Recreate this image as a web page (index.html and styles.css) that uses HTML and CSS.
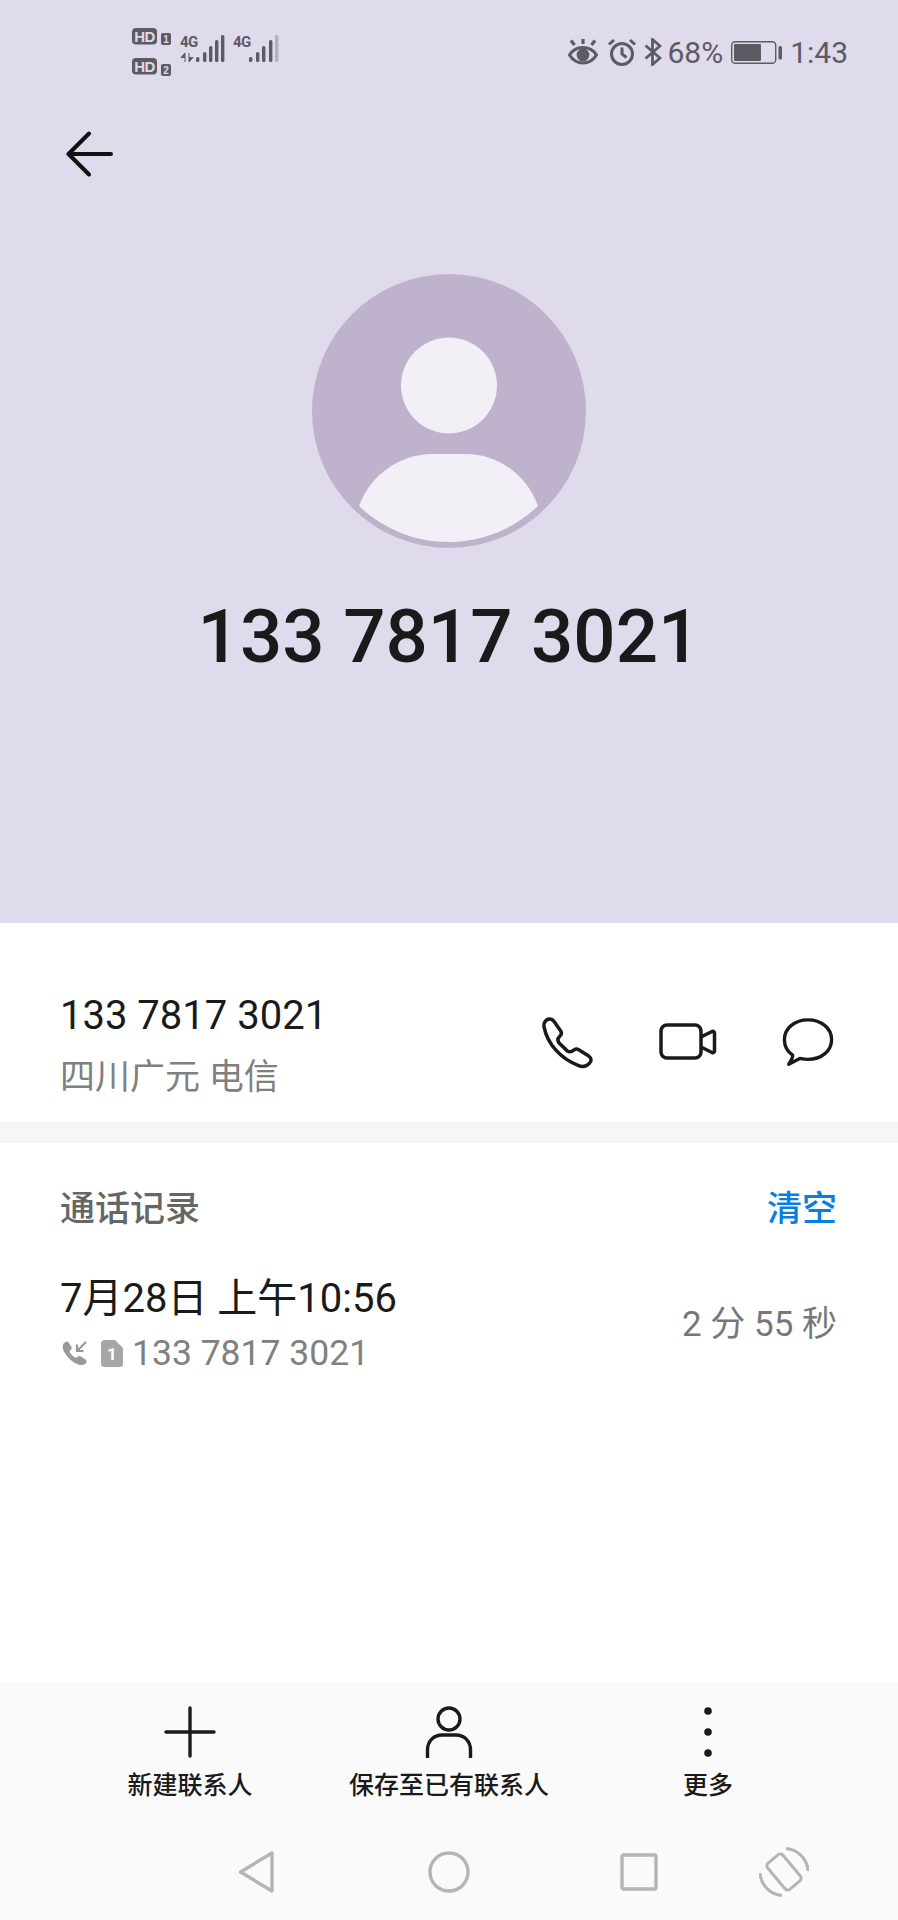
FILE: index.html
```html
<!DOCTYPE html>
<html lang="zh-CN">
<head>
    <meta charset="UTF-8">
    <meta name="viewport" content="width=device-width, initial-scale=1.0">
    <title>133 7817 3021</title>
    <link rel="stylesheet" href="styles.css">
</head>
<body>

    <header class="hero">
        <div class="status-bar">
            <div class="status-left">
                <svg class="icon-hd" viewBox="0 0 42 50" width="42" height="50">
                    <rect x="1" y="1" width="25" height="16.5" rx="4" fill="#5d5a64"/>
                    <text x="13.5" y="14.500" class="hd-text">HD</text>
                    <rect x="30" y="6" width="10" height="12" rx="2" fill="#5d5a64"/>
                    <text x="35" y="15.5" class="hd-num">1</text>
                    <rect x="1" y="31" width="25" height="16.5" rx="4" fill="#5d5a64"/>
                    <text x="13.5" y="44.500" class="hd-text">HD</text>
                    <rect x="30" y="37" width="10" height="12" rx="2" fill="#5d5a64"/>
                    <text x="35" y="46.5" class="hd-num">2</text>
                </svg>
                <svg class="icon-signal" viewBox="0 0 46 30" width="46" height="30">
                    <text x="0" y="13" class="net-text">4G</text>
                    <path d="M5 19v9M5 19l-4 4.5h4M9 28v-9M9 28l4-4.500h-4" fill="#5d5a64" stroke="#5d5a64" stroke-width="1"/>
                    <rect x="16" y="23" width="3.400" height="5" rx="1.500" fill="#5d5a64"/>
                    <rect x="23" y="18" width="3.400" height="10" rx="1.500" fill="#5d5a64"/>
                    <rect x="29" y="12" width="3.400" height="16" rx="1.500" fill="#5d5a64"/>
                    <rect x="35" y="6" width="3.400" height="22" rx="1.500" fill="#5d5a64"/>
                    <rect x="41" y="1" width="3.400" height="27" rx="1.500" fill="#5d5a64"/>
                </svg>
                <svg class="icon-signal" viewBox="0 0 46 30" width="46" height="30">
                    <text x="0" y="13" class="net-text">4G</text>
                    <rect x="16" y="23" width="3.400" height="5" rx="1.500" fill="#5d5a64"/>
                    <rect x="23" y="18" width="3.400" height="10" rx="1.500" fill="#5d5a64"/>
                    <rect x="29" y="12" width="3.400" height="16" rx="1.500" fill="#5d5a64"/>
                    <rect x="36" y="6" width="3.400" height="22" rx="1.500" fill="#5d5a64"/>
                    <rect x="42" y="1" width="3.400" height="27" rx="1.500" fill="#b4b0bd"/>
                </svg>
            </div>
            <div class="status-right">
                <svg viewBox="0 0 30 26" width="30" height="26" fill="none" stroke="#5d5a64" stroke-width="3.200">
                    <path d="M1.500 16C5 10.500 9.500 8.500 15 8.500S25 10.500 28.500 16C25 21.500 20.500 24 15 24S5 21.500 1.500 16Z"/>
                    <circle cx="15" cy="16" r="4.800" fill="#5d5a64"/>
                    <path d="M3 1.500l3.500 4.500M15 0v5M27 1.500L23.500 6"/>
                </svg>
                <svg viewBox="0 0 28 28" width="28" height="28" fill="none" stroke="#5d5a64" stroke-width="3" class="icon-alarm">
                    <circle cx="14" cy="16" r="10.500"/>
                    <path d="M14 9.500V16l4.500 3.500M1 6.500L6 2M27 6.500L22 2"/>
                </svg>
                <svg viewBox="0 0 18 28" width="18" height="28" fill="none" stroke="#5d5a64" stroke-width="2.800" class="icon-bt">
                    <path d="M1.500 7.500L16 20 8.500 26.500V1.500L16 8 1.500 20.500"/>
                </svg>
                <span class="status-text battery-text">68%</span>
                <svg viewBox="0 0 51 23" width="51" height="23" class="icon-battery">
                    <rect x="0.700" y="0.700" width="44" height="21.600" rx="3.500" fill="none" stroke="#5d5a64" stroke-width="1.400"/>
                    <rect x="3" y="3" width="27" height="17" rx="1" fill="#5d5a64"/>
                    <rect x="47.500" y="5" width="3.500" height="13.500" rx="1.500" fill="#5d5a64"/>
                </svg>
                <span class="status-text">1:43</span>
            </div>
        </div>

        <div class="back">
            <svg viewBox="0 0 48 48" width="48" height="48" fill="none" stroke="#111" stroke-width="4" stroke-linecap="round" stroke-linejoin="round">
                <path d="M2.500 24L23 3.500M2.500 24L23 44.500M2.500 24H45"/>
            </svg>
        </div>

        <svg class="avatar" viewBox="312 274 274 274" width="274" height="274">
            <circle cx="449" cy="411" r="137" fill="#bfb2cc"/>
            <circle cx="449" cy="385.500" r="48" fill="#f2eff6"/>
            <path d="M359 506C371 473 402 454 432 454H466C496 454 526 473 538 506A129 129 0 0 1 359 506Z" fill="#f2eff6"/>
        </svg>

        <h1 class="title">133 7817 3021</h1>
    </header>

    <section class="number-row">
        <div class="number-info">
            <div class="number">133 7817 3021</div>
            <div class="location">四川广元 电信</div>
        </div>
        <div class="actions">
            <div class="action">
                <svg viewBox="60 70 175 175" width="58" height="58" fill="none" stroke="#1a1a1a" stroke-width="10.500" stroke-linejoin="round">
                    <path d="M77 95C84 82 98 82 105 92L126 122C130 129 128 133 122 138C115 145 116 153 123 160L146 182C153 187 160 183 166 178C170 175 175 175 180 178L210 197C219 203 219 212 212 219C203 229 190 230 178 225C125 205 85 160 75 108C74 103 75 99 77 95Z"/>
                </svg>
            </div>
            <div class="action">
                <svg viewBox="0 0 58 40" width="58" height="40" fill="none" stroke="#1a1a1a" stroke-width="3.500" stroke-linejoin="round">
                    <rect x="2" y="2" width="40" height="33" rx="6"/>
                    <path d="M42 14L53 8.500C54.500 8 55.500 9 55.500 10V28C55.500 29 54.500 30 53 29.500L42 24"/>
                </svg>
            </div>
            <div class="action">
                <svg viewBox="0 0 54 54" width="52" height="52" fill="none" stroke="#1a1a1a" stroke-width="3.500" stroke-linejoin="round">
                    <path d="M27 3C40.500 3 51.500 11.500 51.500 23.500S40.500 44 27 44C24 44 21 43.500 18.500 43L7 49C9 46 11.500 42.500 11 39.500C6 36 2.500 30 2.500 23.500C2.500 11.500 13.500 3 27 3Z"/>
                </svg>
            </div>
        </div>
    </section>

    <div class="divider"></div>

    <section class="calls">
        <div class="calls-head">
            <span class="calls-title">通话记录</span>
            <span class="calls-clear">清空</span>
        </div>
        <div class="call-item">
            <div>
                <div class="call-date">7月28日 上午10:56</div>
                <div class="call-meta">
                    <svg class="icon-incoming" viewBox="0 0 26 26" width="26" height="26">
                        <path d="M2 3C4 1 6 1 7 3L9.500 7C10 8.500 9.500 9.500 8 10.500C7.500 11 7.500 12 8.500 13.500L12 17C13.500 18 14.500 18 15.500 17C16.500 16 17.500 15.500 19 16.500L23.500 19.500C25 21 25 22.500 23.500 23.500C21.500 25.500 18 25.500 15 24C8.500 21 3.500 15.500 1 9C0.500 6.500 0.500 4.500 2 3Z" fill="#999"/>
                        <path d="M24 2L15 11M15 4.500V11H21.500" fill="none" stroke="#999" stroke-width="2.200"/>
                    </svg>
                    <svg class="icon-sim" viewBox="0 0 22 27" width="22" height="27">
                        <path d="M3 0H14L22 8V24C22 25.500 21 27 19 27H3C1.500 27 0 25.500 0 24V3C0 1.500 1.500 0 3 0Z" fill="#a6a6a6"/>
                        <text x="11" y="20" class="sim-text">1</text>
                    </svg>
                    <span>133 7817 3021</span>
                </div>
            </div>
            <div class="call-duration">2 分 55 秒</div>
        </div>
    </section>

    <footer class="bottom">
        <div class="toolbar">
            <div class="tool">
                <svg viewBox="0 0 52 52" width="52" height="52" fill="none" stroke="#1a1a1a" stroke-width="3.400" stroke-linecap="round">
                    <path d="M26 2V50M2 26H50"/>
                </svg>
                <span>新建联系人</span>
            </div>
            <div class="tool">
                <svg viewBox="0 0 52 52" width="52" height="52" fill="none" stroke="#1a1a1a" stroke-width="3.400">
                    <circle cx="26" cy="13" r="11"/>
                    <path d="M4.500 52V44C4.500 35 11 29 19 29H33C41 29 47.500 35 47.500 44V52"/>
                </svg>
                <span>保存至已有联系人</span>
            </div>
            <div class="tool">
                <svg viewBox="0 0 52 52" width="52" height="52" fill="#1a1a1a">
                    <circle cx="26" cy="5" r="3.800"/>
                    <circle cx="26" cy="26" r="3.800"/>
                    <circle cx="26" cy="47" r="3.800"/>
                </svg>
                <span>更多</span>
            </div>
        </div>
        <nav class="nav-bar">
            <svg class="nav-back" viewBox="0 0 36 42" width="36" height="42" fill="none" stroke="#b5b5b5" stroke-width="3.400" stroke-linejoin="round">
                <path d="M2.500 21L34 2V40Z"/>
            </svg>
            <svg class="nav-home" viewBox="0 0 42 42" width="42" height="42" fill="none" stroke="#b5b5b5" stroke-width="3.400">
                <circle cx="21" cy="21" r="19"/>
            </svg>
            <svg class="nav-recent" viewBox="0 0 38 38" width="38" height="38" fill="none" stroke="#b5b5b5" stroke-width="3.400" stroke-linejoin="round">
                <rect x="2" y="2" width="34" height="34" rx="1.500"/>
            </svg>
            <svg class="nav-rotate" viewBox="0 0 50 50" width="50" height="50" fill="none" stroke="#b5b5b5" stroke-width="3">
                <rect x="15" y="8" width="20" height="34" rx="3.500" transform="rotate(-40 25 25)"/>
                <path d="M27 1.500A24 24 0 0 1 49 24M23 48.500A24 24 0 0 1 1 26"/>
            </svg>
        </nav>
    </footer>

</body>
</html>
```

FILE: styles.css
```css
* {
    box-sizing: border-box;
}
body {
    font-family: Roboto, "Noto Sans CJK SC", sans-serif;
    margin: 0;
    width: 898px;
    height: 1920px;
    display: flex;
    flex-direction: column;
    background-color: #fff;
    color: #1a1a1a;
    overflow: hidden;
}
svg {
    display: block;
    flex-shrink: 0;
}

/* top purple area */
.hero {
    height: 923px;
    background-color: #dfdaec;
    display: flex;
    flex-direction: column;
}
.status-bar {
    height: 90px;
    padding: 27px 50px 0 131px;
    display: flex;
    justify-content: space-between;
    align-items: flex-start;
}
.status-left {
    display: flex;
    align-items: flex-start;
    gap: 7px;
}
.icon-signal {
    margin-top: 7px;
}
.hd-text {
    font-family: "Liberation Sans", sans-serif;
    font-size: 15px;
    font-weight: 700;
    letter-spacing: -0.5px;
    fill: #dfdaec;
    text-anchor: middle;
}
.hd-num {
    font-family: "Liberation Sans", sans-serif;
    font-size: 10px;
    font-weight: 700;
    fill: #dfdaec;
    text-anchor: middle;
}
.net-text {
    font-family: Roboto, sans-serif;
    font-size: 15px;
    font-weight: 700;
    letter-spacing: -0.5px;
    fill: #5d5a64;
}
.status-right {
    display: flex;
    align-items: center;
    padding-top: 10px;
    height: 40px;
    gap: 10px;
}
.status-text {
    font-size: 30px;
    color: #5d5a64;
}
.icon-alarm {
    margin-right: -2px;
}
.icon-bt {
    margin-right: -5px;
}
.battery-text {
    margin-right: -2px;
}
.icon-battery {
    margin-right: -2px;
}
.back {
    margin-top: 40px;
    padding-left: 66px;
}
.avatar {
    margin: 96px auto 0;
}
.title {
    margin: 44px 0 0;
    font-size: 74.5px;
    line-height: 90px;
    font-weight: 500;
    text-align: center;
}

/* number + actions */
.number-row {
    height: 199px;
    padding: 67px 30px 0 60px;
    display: flex;
    justify-content: space-between;
    align-items: flex-start;
}
.number {
    font-size: 40px;
    line-height: 52px;
}
.location {
    font-size: 35px;
    line-height: 48px;
    margin-top: 12px;
    color: #808080;
}
.actions {
    display: flex;
    margin-top: 24px;
}
.action {
    width: 120px;
    height: 58px;
    display: flex;
    justify-content: center;
    align-items: center;
}
.divider {
    height: 21px;
    background-color: #f6f6f6;
}

/* call log */
.calls {
    flex: 1;
    padding: 43px 61px 0 60px;
}
.calls-head {
    display: flex;
    justify-content: space-between;
    font-size: 35px;
    line-height: 48px;
}
.calls-title {
    color: #666;
    font-weight: 500;
}
.calls-clear {
    color: #0a7fe0;
    font-weight: 500;
}
.call-item {
    margin-top: 38px;
    display: flex;
    justify-content: space-between;
    align-items: center;
}
.call-date {
    font-size: 40px;
    line-height: 54px;
}
.call-meta {
    margin-top: 3px;
    display: flex;
    align-items: center;
    font-size: 35.5px;
    line-height: 48px;
    color: #808080;
}
.icon-incoming {
    margin-left: 2px;
}
.icon-sim {
    margin: 0 9px 0 13px;
}
.sim-text {
    font-family: Roboto, sans-serif;
    font-size: 17px;
    font-weight: 700;
    fill: #fff;
    text-anchor: middle;
}
.call-duration {
    font-size: 35px;
    color: #777;
    margin-bottom: 8px;
}

/* bottom toolbar + android nav */
.bottom {
    height: 238px;
    background-color: #fafafa;
}
.toolbar {
    display: flex;
    justify-content: center;
    padding-top: 24px;
}
.tool {
    width: 259px;
    display: flex;
    flex-direction: column;
    align-items: center;
    font-size: 25px;
    line-height: 36px;
    font-weight: 500;
}
.tool span {
    margin-top: 10px;
}
.nav-bar {
    margin-top: 43px;
    padding-left: 238px;
    display: flex;
    align-items: center;
    height: 50px;
}
.nav-home {
    margin-left: 154px;
}
.nav-recent {
    margin-left: 150px;
}
.nav-rotate {
    margin-left: 101px;
}
```
